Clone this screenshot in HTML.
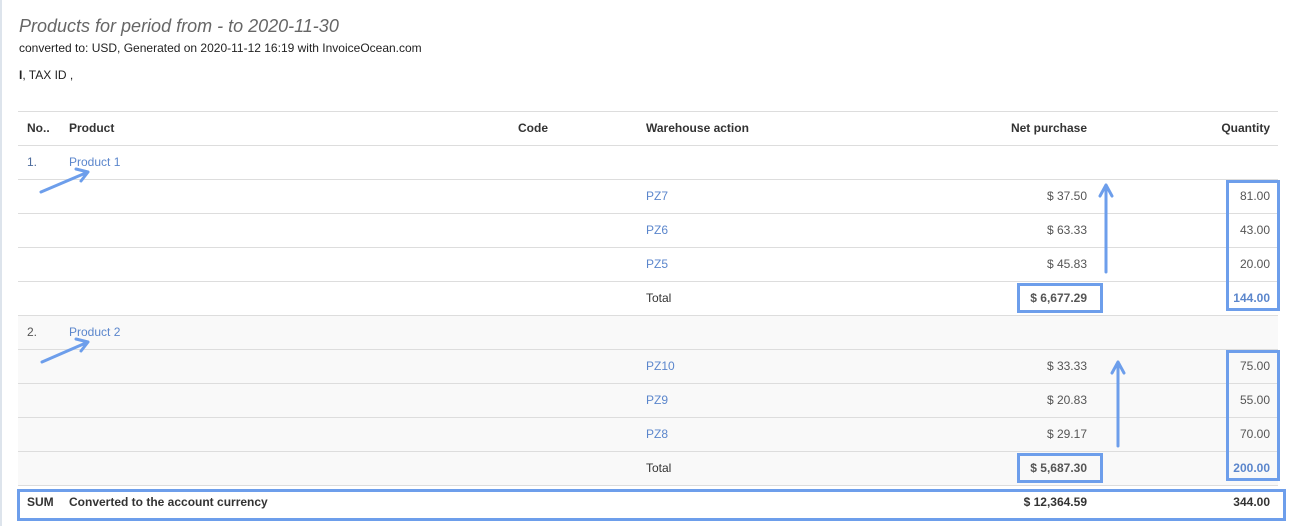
<!DOCTYPE html>
<html><head><meta charset="utf-8"><style>
*{margin:0;padding:0;box-sizing:border-box}
body{width:1298px;height:526px;background:#fff;font-family:"Liberation Sans",Arial,sans-serif;position:relative;overflow:hidden;color:#333}
.lb{position:absolute;left:0;top:0;width:2px;height:526px;background:#dde4ec}
.t{position:absolute;white-space:nowrap;font-size:12px}
.h1{position:absolute;left:19px;top:16px;font-size:18px;font-style:italic;color:#666}
.row{position:absolute;left:18px;width:1260px;height:34px;border-top:1px solid #ddd}
.g{background:#f9f9f9}
.b{font-weight:bold}
.lk{color:#5b86cc}
.n{color:#555}
.box{position:absolute;border:3px solid #6d9eeb}
</style></head><body>
<div class="lb"></div>
<div class="h1">Products for period from - to 2020-11-30</div>
<div class="t" style="left:19px;top:41px;color:#222">converted to: USD, Generated on 2020-11-12 16:19 with InvoiceOcean.com</div>
<div class="t" style="left:19px;top:68px;color:#222"><b>I</b>, TAX ID ,</div>

<div class="row" style="top:111px"></div>
<div class="row" style="top:145px"></div>
<div class="row" style="top:179px"></div>
<div class="row" style="top:213px"></div>
<div class="row" style="top:247px"></div>
<div class="row" style="top:281px"></div>
<div class="row g" style="top:315px"></div>
<div class="row g" style="top:349px"></div>
<div class="row g" style="top:383px"></div>
<div class="row g" style="top:417px"></div>
<div class="row g" style="top:451px;height:35px;border-bottom:1px solid #ddd"></div>

<div class="t b" style="left:27px;top:121px">No..</div>
<div class="t b" style="left:69px;top:121px">Product</div>
<div class="t b" style="left:518px;top:121px">Code</div>
<div class="t b" style="left:646px;top:121px">Warehouse action</div>
<div class="t b" style="right:211px;top:121px">Net purchase</div>
<div class="t b" style="right:28px;top:121px">Quantity</div>

<div class="t" style="left:27px;top:155px;color:#4b6a9b">1.</div>
<div class="t lk" style="left:69px;top:155px">Product 1</div>
<div class="t lk" style="left:646px;top:189px">PZ7</div>
<div class="t lk" style="left:646px;top:223px">PZ6</div>
<div class="t lk" style="left:646px;top:257px">PZ5</div>
<div class="t" style="left:646px;top:291px;color:#333">Total</div>
<div class="t n" style="right:211px;top:189px">$ 37.50</div>
<div class="t n" style="right:211px;top:223px">$ 63.33</div>
<div class="t n" style="right:211px;top:257px">$ 45.83</div>
<div class="t b n" style="right:211px;top:291px">$ 6,677.29</div>
<div class="t n" style="right:28px;top:189px">81.00</div>
<div class="t n" style="right:28px;top:223px">43.00</div>
<div class="t n" style="right:28px;top:257px">20.00</div>
<div class="t b" style="right:28px;top:291px;color:#5b86cc">144.00</div>

<div class="t n" style="left:27px;top:325px">2.</div>
<div class="t lk" style="left:69px;top:325px">Product 2</div>
<div class="t lk" style="left:646px;top:359px">PZ10</div>
<div class="t lk" style="left:646px;top:393px">PZ9</div>
<div class="t lk" style="left:646px;top:427px">PZ8</div>
<div class="t" style="left:646px;top:461px">Total</div>
<div class="t n" style="right:211px;top:359px">$ 33.33</div>
<div class="t n" style="right:211px;top:393px">$ 20.83</div>
<div class="t n" style="right:211px;top:427px">$ 29.17</div>
<div class="t b n" style="right:211px;top:461px">$ 5,687.30</div>
<div class="t n" style="right:28px;top:359px">75.00</div>
<div class="t n" style="right:28px;top:393px">55.00</div>
<div class="t n" style="right:28px;top:427px">70.00</div>
<div class="t b" style="right:28px;top:461px;color:#5b86cc">200.00</div>

<div class="t b" style="left:27px;top:495px">SUM</div>
<div class="t b" style="left:69px;top:495px">Converted to the account currency</div>
<div class="t b" style="right:211px;top:495px">$ 12,364.59</div>
<div class="t b" style="right:28px;top:495px">344.00</div>

<div class="box" style="left:1017px;top:283px;width:86px;height:30px"></div>
<div class="box" style="left:1226px;top:180px;width:54px;height:131px"></div>
<div class="box" style="left:1017px;top:453px;width:86px;height:30px"></div>
<div class="box" style="left:1226px;top:350px;width:54px;height:131px"></div>
<div class="box" style="left:17px;top:489px;width:1269px;height:32px"></div>

<svg width="1298" height="526" style="position:absolute;left:0;top:0" fill="none" stroke="#6d9eeb" stroke-width="3" stroke-linecap="round" stroke-linejoin="round">
<path d="M41 192 L88 172 M76 169 L88 172 L81 181"/>
<path d="M42 362 L88 342 M76 339 L88 342 L81 351"/>
<path d="M1106 272 L1106 185 M1100 196 L1106 185 L1112 196"/>
<path d="M1118 446 L1118 362 M1112 373 L1118 362 L1124 373"/>
</svg>
</body></html>
